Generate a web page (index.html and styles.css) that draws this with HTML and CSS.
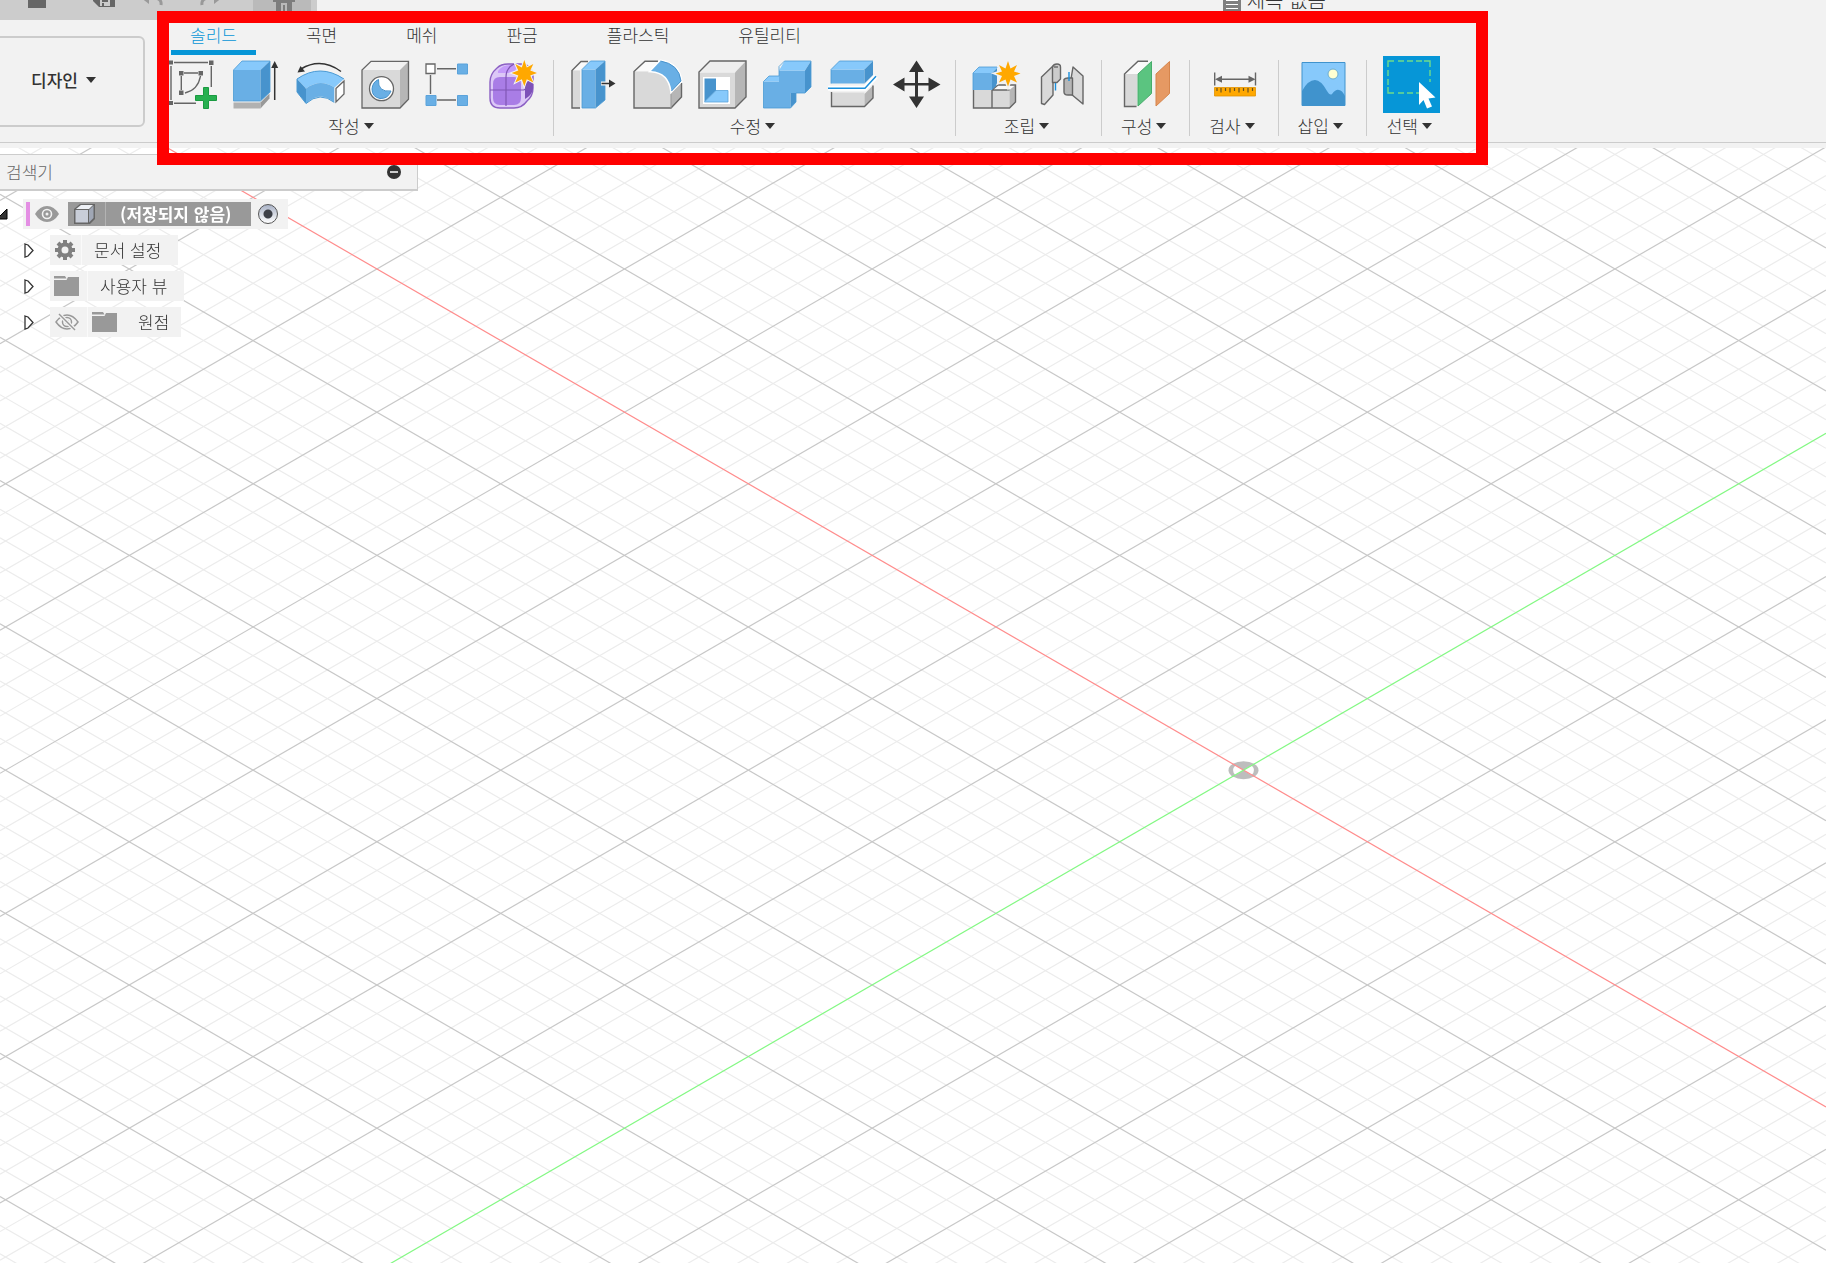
FILE: index.html
```html
<!DOCTYPE html>
<html lang="ko">
<head>
    <meta charset="UTF-8">
    <meta name="viewport" content="width=device-width, initial-scale=1.0">
    <title>제목 없음</title>
    <link rel="stylesheet" href="styles.css">
</head>
<body>
    <header class="app-header">
        <div class="title-bar">
            <div class="quick-bar">
                <button class="quick-btn quick-file" aria-label="파일">
                    <svg width="20" height="24" viewBox="0 0 20 24"><path fill="#666" d="M1 4h12l6 6v14H1z"/></svg>
                </button>
                <button class="quick-btn quick-save" aria-label="저장">
                    <svg width="24" height="24" viewBox="0 0 24 24"><path fill="#666" d="M1 2h22v21H7l-6-6z"/><path fill="#ccc" d="M8 16h10v6H8z"/><path fill="#666" d="M10 16h6v2h-6zM10 19h2v3h-2z"/></svg>
                </button>
                <button class="quick-btn quick-undo" aria-label="실행 취소">
                    <svg width="26" height="24" viewBox="0 0 26 24"><path d="M4 14h12q7 1 6 7" fill="none" stroke="#999" stroke-width="3"/><path fill="#999" d="M10 6v14L1 13z"/></svg>
                </button>
                <button class="quick-btn quick-redo" aria-label="다시 실행">
                    <svg width="26" height="24" viewBox="0 0 26 24"><path d="M22 14H10q-7 1-6 7" fill="none" stroke="#999" stroke-width="3"/><path fill="#999" d="M16 6v14l9-7z"/></svg>
                </button>
                <button class="quick-btn quick-home" aria-label="홈">
                    <svg width="24" height="24" viewBox="0 0 24 24"><path fill="#7d7d7d" d="M12 0l11 10v4h-3v10H4V14H1v-4z"/><path fill="#bababa" d="M9 15h6v9H9z"/><path fill="#7d7d7d" d="M11 17h2v7h-2z"/></svg>
                </button>
            </div>
            <div class="doc-tab">
                <svg width="18" height="20" viewBox="0 0 18 20"><path fill="#7f7f7f" d="M0 0h18v20H0z"/><path stroke="#fff" stroke-width="1" d="M3 4.500h12M3 8.500h12M3 12.500h12M3 16.500h12"/></svg>
                <span class="doc-title">제목 없음</span>
            </div>
        </div>

        <div class="header-main">
            <button class="workspace-btn">디자인 <span class="arrow"></span></button>

            <div class="ribbon">
                <nav class="tabs">
                    <button class="tab active">솔리드</button>
                    <button class="tab">곡면</button>
                    <button class="tab">메쉬</button>
                    <button class="tab">판금</button>
                    <button class="tab">플라스틱</button>
                    <button class="tab">유틸리티</button>
                </nav>

                <div class="tool-groups">
                    <section class="tool-group first">
                        <div class="tools">
                            <button class="tool" aria-label="스케치 작성">
                                <svg viewBox="0 0 48 48"><path d="M5 2.500h34M2 6v34M42.300 6v21M5 43.300h22M15 13h14M12.300 16v14M16 33q13-3 15.500-17" fill="none" stroke="#666" stroke-width="1.400"/><path fill="#666" d="M0 .500h4v4H0zM40 .500h4.500v4.500H40zM10 11h4.500v4.500H10zM29.500 11H34v4.500h-4.500zM10 30.500h4.500V35H10zM0 41h4v4H0z"/><path fill="#27b050" stroke="#1a9a41" d="M34.500 27.500h5v8h8v5h-8v8h-5v-8h-8v-5h8z"/></svg>
                            </button>
                            <button class="tool" aria-label="돌출">
                                <svg viewBox="0 0 48 48"><path fill="#b1b1b1" d="M.500 42.500h27v6H.500z"/><path fill="#999" d="M27.500 42.500l9-9v5l-9 10z"/><path fill="#69afe5" d="M.500 10h27v31H.500z"/><path fill="#87c9fb" d="M.500 10L9 1h28l-9.500 9z"/><path fill="#4793cd" d="M27.500 10L37 1v31l-9.500 9z"/><path d="M.500 41V10L9 1h28v31l-9.500 9z" fill="none" stroke="#4a9ad4" stroke-width=".8"/><path d="M41.700 40V5" stroke="#333" stroke-width="1.500"/><path fill="#333" d="M41.700 1l3.500 7h-7z"/></svg>
                            </button>
                            <button class="tool" aria-label="회전">
                                <svg viewBox="0 0 48 48"><path fill="#87c9fb" d="M0 19Q23 3 47 19l-9.500 8.500Q23 18 9 28.500z"/><path fill="#4793cd" d="M0 19l9 9.500v15L0 32z"/><path fill="#69afe5" d="M9 28.500Q23 18 37.500 27.500v15Q23 30 9 43.500z"/><path d="M0 19Q23 3 47 19M0 19v13l9 11.500Q23 31 37.500 42.500" fill="none" stroke="#4a9ad4"/><path fill="#fff" stroke="#f2f2f2" stroke-width="3" d="M39 28.500l8.500-7.500v13L39 42z"/><path fill="#fff" stroke="#666" stroke-width="1.300" d="M39 28.500l8-7.500v13l-8 8z"/><path d="M4 9Q24-3 44 11.500" fill="none" stroke="#333" stroke-width="1.500"/><path fill="#333" d="M.500 12.500L3.500 6l4.500 5.500z"/></svg>
                            </button>
                            <button class="tool" aria-label="구멍">
                                <svg viewBox="0 0 48 48"><path fill="#d9d9d9" d="M1 10h38v38H1z"/><path fill="#f2f2f2" d="M1 10l9-8.500h37.500L39 10z"/><path fill="#b6b6b6" d="M39 10l8.500-8.500v38L39 48z"/><path d="M1 48V10l9-8.700h37.500v38L39 48z" fill="none" stroke="#666" stroke-width="1.300"/><circle cx="20.500" cy="28.700" r="12" fill="#fff" stroke="#666" stroke-width="1.300"/><path fill="#69afe5" stroke="#4793cd" d="M17.500 19.500q-1 13 12.500 11.500-3 8-11 7.500-8-1.500-8-9.500.500-7 6.500-9.500z"/></svg>
                            </button>
                            <button class="tool" aria-label="패턴">
                                <svg viewBox="0 0 48 48"><path d="M12 8.700h19M5.500 15v19M12 40h19" stroke="#666" stroke-width="1.400"/><path fill="#fff" stroke="#666" stroke-width="1.300" d="M1 4h9v9.500H1z"/><path fill="#69afe5" stroke="#5ba3db" d="M32.500 4h10v10h-10zM1 35.500h10v10H1zM32.500 35.500h10v10h-10z"/></svg>
                            </button>
                            <button class="tool" aria-label="양식 작성">
                                <svg viewBox="0 0 48 48"><path fill="#dcc8f7" stroke="#8c60c4" stroke-width="1.400" d="M1 22q0-8 7-14 4-4 11-4h12q12 0 13 12v12q0 8-6 13-5 7-13 7H11Q1 48 1 38z"/><path fill="#c49afa" d="M9 11q4-6 12-6h11q-5 2-7 8H9z"/><path fill="#a97de6" d="M4 24q0-7 7-7h14q7 0 7 7v14q0 7-7 7H11q-7 0-7-7z"/><path fill="#7d51b8" d="M36 25q1-3 8-8v12q-1 6-8 10z"/><path d="M1 30h34l9-9M17 46V17q0-9 8-13" fill="none" stroke="#8057b5" stroke-width="1.200"/><path fill="#ffa800" stroke="#f2f2f2" stroke-width="2" paint-order="stroke" d="M35.300 0l2.500 7.500 6.500-3.500-3 6.500 6.700 2.500-6.700 2.500 3 7-6.500-3.300-2.500 7-2.500-7-6.500 3.300 3-7-6.700-2.500 6.700-2.500-3-6.500 6.500 3.500z"/></svg>
                            </button>
                        </div>
                        <button class="group-label">작성<span class="arrow"></span></button>
                    </section>

                    <section class="tool-group">
                        <div class="tools">
                            <button class="tool" aria-label="밀기/당기기">
                                <svg viewBox="0 0 48 48"><path fill="#fafafa" d="M4 10.500l9-9h7l-8 9z"/><path fill="#d9d9d9" d="M4 10.500h8V48H4z"/><path d="M12 48H4V10.500l9-9h7" fill="none" stroke="#666" stroke-width="1.400"/><path fill="#69afe5" d="M14 9.500h13.500V48H14z"/><path fill="#87c9fb" d="M14 9.500L22.500 1H37l-9.500 8.500z"/><path fill="#4793cd" d="M27.500 9.500L37 1v39l-9.500 8z"/><path d="M14 48V9.500L22.500 1H37v39l-9.500 8z" fill="none" stroke="#4a9ad4" stroke-width=".8"/><path d="M33 23.500h10" stroke="#f2f2f2" stroke-width="4"/><path d="M33.500 23.500H43" stroke="#333" stroke-width="1.500"/><path fill="#333" d="M41 19.500l6.500 4-6.500 4z"/></svg>
                            </button>
                            <button class="tool" aria-label="모깎기">
                                <svg viewBox="0 0 48 48"><path fill="#fafafa" d="M1 11.500l11-10h14l-9 10z"/><path fill="#d9d9d9" d="M1 11.500h16q18 0 21 21V48H1z"/><path fill="#b6b6b6" d="M38 33l10.500-10v14L38 48z"/><path d="M25 1.300H12L1 11.500V48h37l10.500-11V23" fill="none" stroke="#666" stroke-width="1.400"/><path d="M38 34v14" stroke="#999"/><path fill="#69afe5" stroke="#fff" stroke-width="3" paint-order="stroke" d="M18 11L27.500 1Q46 4 48 21L38.500 31Q36 12 18 11z"/><path d="M27.500 1Q46 4 48 21L38.500 31" fill="none" stroke="#4793cd"/></svg>
                            </button>
                            <button class="tool" aria-label="쉘">
                                <svg viewBox="0 0 48 48"><path fill="#d9d9d9" d="M1 12.500h36V48H1z"/><path fill="#eee" d="M1 12.500l10.500-11.500H48L37 12.500z"/><path fill="#b6b6b6" d="M37 12.500L48 1v36L37 48z"/><path d="M1 48V12L12 1h36v36L37 48z" fill="none" stroke="#666" stroke-width="1.400"/><path fill="#fff" d="M5 17h27v27H5z"/><path fill="#4793cd" d="M6.500 18.500H18v12L6.500 42z"/><path fill="#87c9fb" stroke="#5ba3db" stroke-width=".8" d="M6.500 42L18 30.500h12V42z"/></svg>
                            </button>
                            <button class="tool" aria-label="결합">
                                <svg viewBox="0 0 48 48"><path fill="#69afe5" d="M.500 21.500H16V10.500h26V33H27.500v15H.500z"/><path fill="#87c9fb" d="M.500 21.500L6 16h10v5.500zM16 10.500L21.500 1H48l-6 9.500z"/><path fill="#4793cd" d="M42 10.500L48 1v26l-6 6zM27.500 33H33v9l-5.500 6z"/><path d="M.500 48V21.500L6 16h10V6.500L21.500 1H48v26l-6 6h-9v9l-5.500 6z" fill="none" stroke="#4a9ad4" stroke-width=".8"/></svg>
                            </button>
                            <button class="tool" aria-label="본체 분할">
                                <svg viewBox="0 0 48 48"><path fill="#d9d9d9" d="M3.500 32.500h33V46.500h-33z"/><path fill="#b6b6b6" d="M36.500 34L45 25.500V38l-8.500 8.500z"/><path d="M3.500 32v14.500h33L45 38V25.500" fill="none" stroke="#666" stroke-width="1.400"/><path fill="#69afe5" d="M3 9.500h33.500V23.500H3z"/><path fill="#87c9fb" d="M3 9.500L11.500 1H45l-8.500 8.500z"/><path fill="#4793cd" d="M36.500 9.500L45 1v14l-8.500 8.500z"/><path d="M3 23.500v-14L11.500 1H45" fill="none" stroke="#4a9ad4" stroke-width=".8"/><path d="M0 28.300h37l11-12" fill="none" stroke="#fff" stroke-width="5"/><path d="M0 28.300h37l11-12" fill="none" stroke="#1a8fdc" stroke-width="1.500"/></svg>
                            </button>
                            <button class="tool" aria-label="이동">
                                <svg viewBox="0 0 48 48"><path fill="#333" d="M23.500.500l7.500 11.500h-6v11h10.500V17.500L47.500 24.500 35.500 31.500v-6H25v11h6L23.500 48 16 36.500h6v-11H11.500v6L0 24.500l11.500-7V23H22V12h-6z"/></svg>
                            </button>
                        </div>
                        <button class="group-label">수정<span class="arrow"></span></button>
                    </section>

                    <section class="tool-group small">
                        <div class="tools">
                            <button class="tool" aria-label="새 구성요소">
                                <svg viewBox="0 0 48 48"><path fill="#d9d9d9" d="M1.500 30h36v18h-36z"/><path fill="#fafafa" d="M20 30l6-5h17.500l-6 5z"/><path fill="#b6b6b6" d="M37.500 30l6-5v17l-6 6z"/><path d="M1.500 30v18h36l6-6V25H26l-6 5v18M20 30h17.500" fill="none" stroke="#666" stroke-width="1.400"/><path fill="#69afe5" d="M1 13h19v17H1z"/><path fill="#87c9fb" d="M1 13l6-6h19l-6 6z"/><path fill="#4793cd" d="M20 13l5-5v17l-5 5z"/><path d="M1 30V13l6-6h18" fill="none" stroke="#4a9ad4" stroke-width=".8"/><path fill="#ffa800" stroke="#f2f2f2" stroke-width="3" paint-order="stroke" d="M36 1l2.500 7.500L45 5l-3 6.500 6.500 2-6.500 2.500 3 6.500-6.500-3-2.500 7-2.500-7-6.500 3 3-6.500-6.500-2.500 6.500-2L27 5l6.500 3.500z"/></svg>
                            </button>
                            <button class="tool" aria-label="접합">
                                <svg viewBox="0 0 48 48"><g stroke="#666" stroke-width="1.400" stroke-linejoin="round"><path fill="#d9d9d9" d="M4.500 17L16 6v29l-8.500 9.500-3-1z"/><path fill="#ccc" d="M15.500 7q1-3 4.500-3t3.500 3v12l-3.500 3.500h-4.500z"/><path fill="#d9d9d9" d="M36 7l10 9v28L34 34V19z"/><path fill="#b6b6b6" d="M27 19.500q1-1.500 4-1.500h4.500v17H31q-4 0-4-3z"/></g><path d="M17 7h4" stroke="#666" stroke-width="1.400"/><path d="M18.500 23v7.500M32 12v9" stroke="#1a8fdc" stroke-width="1.400"/></svg>
                            </button>
                        </div>
                        <button class="group-label">조립<span class="arrow"></span></button>
                    </section>

                    <section class="tool-group single">
                        <div class="tools">
                            <button class="tool" aria-label="간격띄우기 평면">
                                <svg viewBox="0 0 48 48"><path fill="#fafafa" d="M2.500 14L16 1.500h13L15 14z"/><path fill="#d9d9d9" d="M2.500 14H15v32.500H2.500z"/><path d="M14.500 46.500h-12V14L16 1.300h10" fill="none" stroke="#666" stroke-width="1.400"/><path fill="#5bc480" stroke="#47ad6b" d="M16 14L29.500 1.500v32L16 46z"/><path fill="#e69963" stroke="#d6854c" d="M34 14L47.500 1.500v32L34 46z"/></svg>
                            </button>
                        </div>
                        <button class="group-label">구성<span class="arrow"></span></button>
                    </section>

                    <section class="tool-group single">
                        <div class="tools">
                            <button class="tool" aria-label="측정">
                                <svg viewBox="0 0 48 48"><path d="M4.700 12.500v13M45.500 12.500v13M8 19.300h34" stroke="#666" stroke-width="1.400"/><path fill="#666" d="M5 19.300l7-3.500v7zM45.500 19.300l-7-3.500v7z"/><path fill="#ffa800" stroke="#e09200" stroke-width=".8" d="M4.500 27.500h41v8.500h-41z"/><path d="M7 28v3M11 28v4.500M15.500 28v3M20 28v4.500M24.500 28v3M29 28v4.500M33.500 28v3M38 28v4.500M42.500 28v3" stroke="#665022" stroke-width="1.200"/></svg>
                            </button>
                        </div>
                        <button class="group-label">검사<span class="arrow"></span></button>
                    </section>

                    <section class="tool-group single">
                        <div class="tools">
                            <button class="tool" aria-label="캔버스">
                                <svg viewBox="0 0 48 48"><path fill="#87c9fb" d="M4 2h43v43H4z"/><path fill="#4093cd" d="M4 31q6-11 13-11 6 0 12 11 3 5 5 3 4-5 7-4 3 0 6 6v9H4z"/><circle cx="35" cy="14" r="5" fill="#ffffd2" stroke="#6faed0"/><path d="M4 2.500h43v43H4z" fill="none" stroke="#4093cd"/></svg>
                            </button>
                        </div>
                        <button class="group-label">삽입<span class="arrow"></span></button>
                    </section>

                    <section class="tool-group small last">
                        <div class="tools">
                            <button class="tool selected" aria-label="선택">
                                <svg viewBox="0 0 57 57"><path d="M5 11V5h6M41 5h6v6M5 31v6h6" fill="none" stroke="#6fdc8c" stroke-width="1.400"/><path d="M15 5h24M15 37h21M5 14v15M47 14v12" fill="none" stroke="#6fdc8c" stroke-width="1.400" stroke-dasharray="6 3"/><path fill="#fff" d="M36 26l16.500 15.500-7 1 3.500 8-5 2-3.500-8.500L36 49z"/></svg>
                            </button>
                        </div>
                        <button class="group-label">선택<span class="arrow"></span></button>
                    </section>
                </div>

                <div class="highlight"></div>
            </div>
        </div>
    </header>

    <main class="viewport">
        <canvas id="grid" class="grid"></canvas>

        <aside class="browser">
            <div class="browser-head">
                <span>검색기</span>
                <button class="collapse-btn" aria-label="접기"></button>
            </div>

            <ul class="tree">
                <li class="tree-row root">
                    <button class="toggle" aria-label="접기">
                        <svg width="8" height="12" viewBox="0 0 8 12"><path fill="#333" stroke="#000" d="M7 1v10H-3z"/></svg>
                    </button>
                    <div class="node">
                        <span class="pink-bar"></span>
                        <button class="eye" aria-label="가시성">
                            <svg width="24" height="16" viewBox="0 0 24 16"><path fill="#999" d="M0 8q5-8 12-8t12 8q-5 8-12 8T0 8z"/><circle cx="12" cy="8" r="4.500" fill="#999" stroke="#f2f2f2" stroke-width="1.600"/><circle cx="12" cy="8" r="1.500" fill="#f2f2f2"/></svg>
                        </button>
                        <label class="doc-name" for="activate">
                            <span class="doc-icon"><svg width="22" height="22" viewBox="0 0 22 22"><path fill="#666" d="M0 6l6-5h15v15l-5 5H0z"/><path fill="#c8cdd8" d="M1.500 7h12.500v12.500H1.500z"/><path fill="#eef1f6" d="M2 6l5-4h12l-4 4z"/><path fill="#a0a7b5" d="M15 7l4.500-4.500V15L15 19.500z"/></svg></span>
                            <span class="doc-text">(저장되지 않음)</span>
                        </label>
                        <input type="radio" id="activate" class="activate" checked>
                    </div>
                </li>
                <li class="tree-row">
                    <button class="toggle" aria-label="펼치기"><svg width="10" height="15" viewBox="0 0 10 15"><path fill="#fff" stroke="#333" stroke-width="1.300" d="M1 1l3 1 5 5.500L4 13l-3 1z"/></svg></button>
                    <div class="node">
                        <span class="node-icon gear-cell"><svg width="20" height="20" viewBox="0 0 20 20"><path d="M10 0v20M0 10h20M3 3l14 14M17 3L3 17" stroke="#808080" stroke-width="4"/><circle cx="10" cy="10" r="5.500" fill="#f2f2f2" stroke="#808080" stroke-width="4"/></svg></span>
                        <span class="node-text">문서 설정</span>
                    </div>
                </li>
                <li class="tree-row">
                    <button class="toggle" aria-label="펼치기"><svg width="10" height="15" viewBox="0 0 10 15"><path fill="#fff" stroke="#333" stroke-width="1.300" d="M1 1l3 1 5 5.500L4 13l-3 1z"/></svg></button>
                    <div class="node">
                        <span class="node-icon"><svg width="26" height="20" viewBox="0 0 26 20"><path fill="#999" d="M0 0h11l1.500 2.500H0zM0 4h12.500l1.500-3h11v19H0z"/></svg></span>
                        <span class="node-text">사용자 뷰</span>
                    </div>
                </li>
                <li class="tree-row">
                    <button class="toggle" aria-label="펼치기"><svg width="10" height="15" viewBox="0 0 10 15"><path fill="#fff" stroke="#333" stroke-width="1.300" d="M1 1l3 1 5 5.500L4 13l-3 1z"/></svg></button>
                    <div class="node origin-node">
                        <button class="node-icon" aria-label="가시성"><svg width="24" height="18" viewBox="0 0 24 18"><path d="M1 9q5-7 11-7t11 7q-5 7-11 7T1 9z" fill="none" stroke="#999" stroke-width="1.500"/><circle cx="12" cy="9" r="4.500" fill="none" stroke="#999" stroke-width="1.500"/><circle cx="12" cy="9" r="2" fill="#999"/><path d="M4 1l16 16" stroke="#f2f2f2" stroke-width="4"/><path d="M4 1l16 16" stroke="#999" stroke-width="1.500"/></svg></button>
                        <span class="node-icon"><svg width="26" height="20" viewBox="0 0 26 20"><path fill="#999" d="M0 0h11l1.500 2.500H0zM0 4h12.500l1.500-3h11v19H0z"/></svg></span>
                        <span class="node-text">원점</span>
                    </div>
                </li>
            </ul>
        </aside>
    </main>

    <script src="grid.js"></script>
</body>
</html>
```

FILE: styles.css
```css
* {
    margin: 0;
    padding: 0;
    box-sizing: border-box;
}

body {
    font-family: "Noto Sans CJK KR", "Noto Sans", sans-serif;
    font-size: 17px;
    font-weight: 300;
    line-height: 24px;
    color: #333;
    background: #fff;
    min-height: 100vh;
    display: flex;
    flex-direction: column;
    overflow: hidden;
}

button {
    font: inherit;
    color: inherit;
    background: none;
    border: none;
    cursor: pointer;
}

svg {
    display: block;
    flex-shrink: 0;
}

.arrow {
    display: inline-block;
    border: 5px solid transparent;
    border-top: 6px solid #333;
    border-bottom: 0;
}

/* Header */
.app-header {
    background: #f2f2f2;
    padding-bottom: 5px;
}

.title-bar {
    display: flex;
    height: 20px;
    overflow: hidden;
}

.quick-bar {
    display: flex;
    background: #ccc;
    padding-right: 6px;
}

.quick-btn {
    display: flex;
    justify-content: center;
    align-items: flex-end;
    padding-bottom: 12px;
}

.quick-file {
    width: 73px;
}

.quick-save {
    width: 62px;
}

.quick-undo {
    width: 34px;
}

.quick-redo {
    width: 84px;
}

.quick-btn.quick-home {
    width: 58px;
    background: #bababa;
    padding: 0 0 8px 4px;
}

.doc-tab {
    flex: 1;
    display: flex;
    align-items: flex-end;
    gap: 6px;
    padding-left: 49.6%;
    padding-bottom: 8px;
    font-size: 20px;
}

.header-main {
    display: flex;
    align-items: flex-start;
    border-bottom: 1px solid #ccc;
}

.workspace-btn {
    display: flex;
    align-items: center;
    justify-content: center;
    gap: 8px;
    width: 153px;
    height: 91px;
    margin: 16px 24px 0 -8px;
    padding: 0 10px 4px 0;
    border: 2px solid #ccc;
    border-radius: 6px;
    font-weight: 500;
}

.ribbon {
    position: relative;
    padding-right: 36px;
    padding-bottom: 6px;
}

.tabs {
    display: flex;
    gap: 31px;
    padding-left: 2px;
    margin-bottom: 5px;
}

.tab {
    height: 35px;
    padding: 0 19px;
    border-bottom: 5px solid transparent;
}

.tab.active {
    color: #0696d7;
    border-bottom-color: #0696d7;
}

.tool-groups {
    display: flex;
}

.tool-group {
    display: flex;
    flex-direction: column;
    align-items: center;
    height: 76px;
    padding: 0 14px;
    border-right: 1px solid #ccc;
}

.tool-group.first {
    padding: 0 16px 0 0;
}

.tool-group.small {
    padding: 0 16px;
}

.tool-group.single {
    padding: 0 19px;
}

.tool-group.last {
    border-right: none;
    padding-right: 0;
}

.tools {
    display: flex;
    gap: 17px;
}

.first .tools {
    gap: 16px;
}

.tool {
    width: 48px;
    height: 48px;
}

.tool svg {
    width: 100%;
    height: 100%;
    overflow: visible;
}

.tool.selected {
    width: 57px;
    height: 57px;
    margin: -4px 0 -5px;
    background: #0696d7;
}

.group-label {
    display: flex;
    align-items: center;
    gap: 4px;
    margin-top: 6px;
    padding-right: 4px;
}

/* Red frame around the toolbar */
.highlight {
    position: absolute;
    top: -9px;
    right: -12px;
    bottom: -23px;
    left: -12px;
    border: 12px solid #f00;
    pointer-events: none;
    z-index: 2;
}

/* Viewport */
.viewport {
    position: relative;
    flex: 1;
    padding-top: 6px;
}

.grid {
    position: absolute;
    top: 0;
    left: 0;
    width: 100%;
    height: 100%;
}

.browser {
    position: relative;
    width: 418px;
}

.browser-head {
    display: flex;
    align-items: center;
    justify-content: space-between;
    height: 37px;
    padding: 0 16px 0 6px;
    background: #f2f2f2;
    border: 1px solid #ccc;
    border-bottom-width: 2px;
    border-left: none;
    color: #666;
}

.collapse-btn {
    display: flex;
    align-items: center;
    justify-content: center;
    width: 14px;
    height: 14px;
    border-radius: 50%;
    background: #333;
}

.collapse-btn::before {
    content: "";
    width: 8px;
    height: 2px;
    background: #ccc;
}

.tree {
    display: flex;
    flex-direction: column;
    align-items: flex-start;
    gap: 6px;
    list-style: none;
    margin-top: 8px;
}

.tree-row {
    display: flex;
    align-items: center;
    gap: 16px;
    padding-left: 24px;
}

.tree-row.root {
    gap: 15px;
    padding-left: 0;
}

.node {
    display: flex;
    align-items: center;
    height: 30px;
    background: #f2f2f2;
}

.root .node {
    padding: 0 10px 0 3px;
}

.pink-bar {
    width: 4px;
    height: 24px;
    background: #e48fe4;
}

.eye {
    margin: 0 9px 0 5px;
}

.doc-name {
    display: flex;
    align-items: center;
    height: 24px;
    background: #999;
    color: #fff;
    font-weight: 700;
}

.doc-icon {
    padding: 1px 9px 1px 6px;
    border-right: 1px solid #b3b3b3;
}

.doc-text {
    padding: 0 20px 0 14px;
}

.activate {
    appearance: none;
    width: 20px;
    height: 20px;
    margin-left: 7px;
    border: 1px solid #555;
    border-radius: 50%;
    background: radial-gradient(circle, #3c3f47 0 4px, transparent 5px), linear-gradient(#a9b2c6, #fff);
}

.node-icon {
    display: flex;
    align-items: center;
    justify-content: center;
    width: 38px;
    height: 30px;
    padding-right: 4px;
    border-right: 1px solid #fafafa;
}

.node-icon.gear-cell {
    width: 32px;
    padding-right: 2px;
}

.node-icon + .node-icon {
    border-right: none;
}

.node-text {
    padding: 0 17px 0 12px;
}

.origin-node .node-text {
    padding-right: 12px;
}
```

FILE: grid.js
```javascript
const canvas = document.getElementById('grid');
const ctx = canvas.getContext('2d');

// Half diagonals of one major cell
const CELL_X = 123.8;
const CELL_Y = 71.6;
const STEPS = 5;

function line(cx, cy, dir, color) {
    const slope = dir * CELL_Y / CELL_X;
    ctx.strokeStyle = color;
    ctx.beginPath();
    ctx.moveTo(0, cy - cx * slope);
    ctx.lineTo(canvas.width, cy + (canvas.width - cx) * slope);
    ctx.stroke();
}

function drawGrid() {
    canvas.width = canvas.clientWidth;
    canvas.height = canvas.clientHeight;
    const cx = canvas.width * 0.681;
    const cy = canvas.height * 0.558;
    const count = 100;
    ctx.lineWidth = 1.2;

    for (const major of [false, true]) {
        for (let i = -count; i <= count; i++) {
            if (i === 0 || (i % STEPS === 0) !== major) continue;
            const y = cy + i * 2 * CELL_Y / STEPS;
            const color = major ? '#c8c8c8' : '#ececec';
            line(cx, y, 1, color);
            line(cx, y, -1, color);
        }
    }

    // Origin marker
    ctx.fillStyle = '#bdbdbd';
    ctx.beginPath();
    ctx.ellipse(cx, cy, 15, 9, 0, 0, Math.PI * 2);
    ctx.fill();
    ctx.fillStyle = '#fff';
    for (const side of [-1, 1]) {
        ctx.beginPath();
        ctx.moveTo(cx, cy);
        ctx.lineTo(cx + side * 8, cy - 5);
        ctx.quadraticCurveTo(cx + side * 13, cy, cx + side * 8, cy + 5);
        ctx.fill();
    }

    line(cx, cy, 1, '#ff8c8c');
    line(cx, cy, -1, '#84f884');
}

drawGrid();
window.addEventListener('resize', drawGrid);
```
